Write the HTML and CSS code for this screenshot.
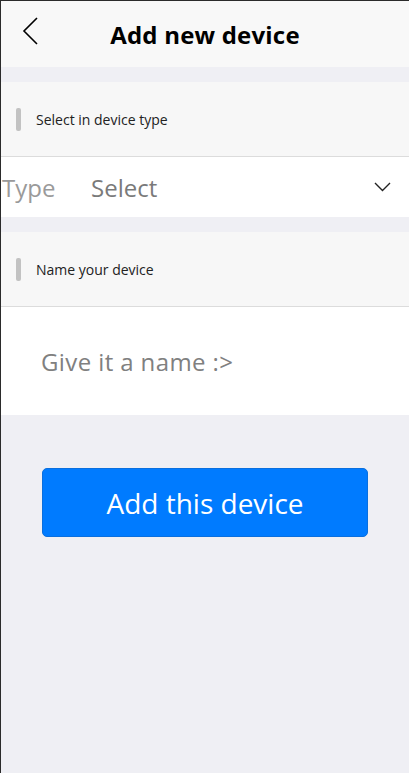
FILE: index.html
```html
<!DOCTYPE html>
<html>
<head>
<meta charset="utf-8">
<link rel="stylesheet" href="styles.css">
</head>
<body>
<div class="page">
  <header class="nav">
    <svg class="back" width="16" height="28" viewBox="0 0 16 28"><path d="M15 1 L2 14 L15 27" fill="none" stroke="#000" stroke-width="1.6"/></svg>
    <h1 class="title">Add new device</h1>
  </header>

  <div class="section-head">
    <span class="bar"></span>
    <span class="label">Select in device type</span>
  </div>
  <div class="type-row">
    <span class="type-label">Type</span>
    <span class="type-value">Select</span>
    <svg class="caret" width="17" height="10" viewBox="0 0 17 10"><path d="M1 1 L8.5 8.5 L16 1" fill="none" stroke="#222" stroke-width="1.4"/></svg>
  </div>

  <div class="section-head">
    <span class="bar"></span>
    <span class="label">Name your device</span>
  </div>
  <div class="name-row">
    <span class="placeholder">Give it a name :&gt;</span>
  </div>

  <div class="actions">
    <button class="primary">Add this device</button>
  </div>
</div>
</body>
</html>
```

FILE: styles.css
```css
html, body {
  margin: 0;
  padding: 0;
  height: 100%;
}
body {
  background: #efeff4;
  font-family: "Open Sans", "Noto Sans", sans-serif;
}
.page {
  box-sizing: border-box;
  min-height: 773px;
  border-left: 1px solid #2b2b2b;
  border-top: 1px solid #2b2b2b;
  background: #efeff4;
}
.nav {
  height: 66px;
  background: #f8f8f8;
  display: flex;
  align-items: center;
  justify-content: center;
  position: relative;
}
.back {
  position: absolute;
  left: 21px;
  top: 16px;
}
.title {
  margin: 0;
  font-size: 24px;
  font-weight: 700;
  color: #000;
  letter-spacing: 0.2px;
}
.section-head {
  margin-top: 15px;
  height: 74px;
  background: #f7f7f7;
  border-bottom: 1px solid #dcdcdc;
  display: flex;
  align-items: center;
  padding-left: 15px;
}
.bar {
  width: 5px;
  height: 23px;
  border-radius: 2px;
  background: #c2c2c2;
}
.label {
  margin-left: 15px;
  font-size: 14px;
  color: #222;
  letter-spacing: 0;
}
.type-row {
  height: 60px;
  background: #fff;
  display: flex;
  align-items: center;
  font-size: 24px;
}
.type-label {
  color: #9a9a9a;
  margin-left: 1px;
  width: 89px;
}
.type-value {
  color: #7a7a7a;
  flex: 1;
}
.caret {
  margin-right: 18px;
}
.name-row {
  height: 108px;
  background: #fff;
  display: flex;
  align-items: center;
  padding-left: 40px;
}
.placeholder {
  font-size: 24px;
  color: #808080;
  letter-spacing: 0.4px;
}
.actions {
  padding: 53px 41px 0 41px;
}
.primary {
  display: block;
  width: 100%;
  height: 69px;
  border: 1px solid #0a6fde;
  border-radius: 5px;
  background: #007bff;
  color: #fff;
  font-family: inherit;
  font-size: 28px;
  padding: 0;
}
```
